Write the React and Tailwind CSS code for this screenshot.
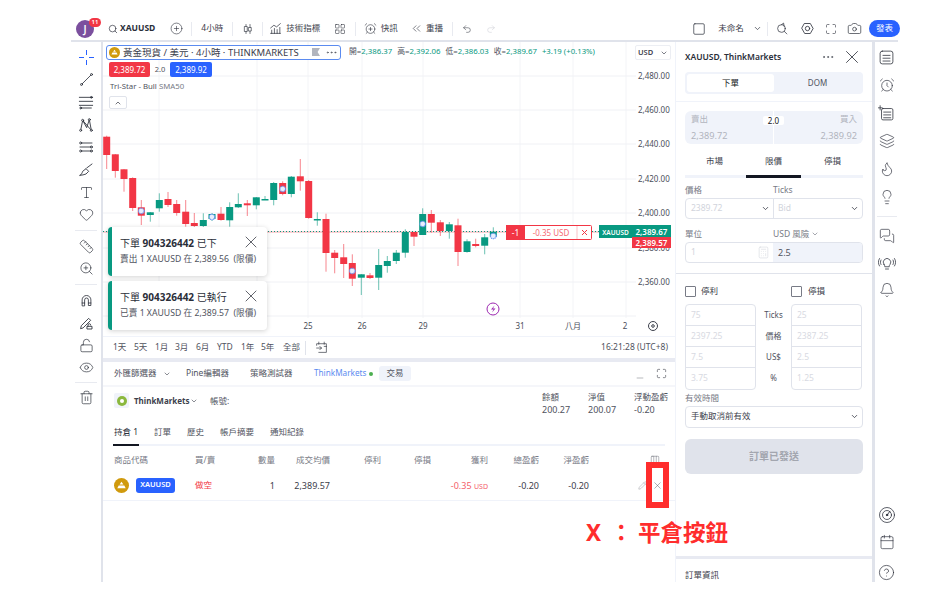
import React from "react";
import { Search, CirclePlus, LayoutGrid, AlarmClockPlus, ChevronsLeft, Undo2, Redo2, Square, ChevronDown, ChevronUp, Maximize, Camera, X, Ellipsis, Minus, Layers, Flame, Lightbulb, MessagesSquare, Bell, Calendar, CircleHelp, AlarmClock, Ruler, ZoomIn, LockOpen, Eye, Trash2, Heart, Type, Pencil, Calculator, Columns3 } from "lucide-react";

const C = [
[106.7,136.7,155,135.7,169,0],[115.3,154.3,171,154,177.7,0],[124,169.3,179,169,191.7,0],[132.7,178,208,177.3,211,0],[141.3,207.3,215.7,200,225,0],[150.3,212.3,215,212,221.7,1],[159.3,200,208.3,193.3,211.7,1],[168,199,205,192,207,0],[176.7,204,213,200,215.7,0],[185.7,211.7,224,200,226.7,0],[194.3,223,226,213,227,0],[203.3,220,226,213.3,227.3,1],[212,214,219,213,221,1],[221,213.7,220,207,220.7,0],[229.7,207,220.3,202.3,226.7,1],[238.3,204,207.3,193.3,208,1],[247.3,203.3,205.3,200,216,0],[256.3,197.3,205.3,197,209.3,1],[265,199,200,196,200,1],[273.7,183,200,182,205.3,1],[282.7,183,194,181.3,195.3,0],[291.3,176.7,194,176,197.3,1],[300.3,176.3,181.3,159,190.7,0],[308.7,181,218,180,218.7,0],[317.3,219,219.7,212.3,225.7,1],[326,219,253,213.7,271.7,0],[334.7,252.7,258,250,273.3,0],[343.7,257.3,264,244,278,0],[352.3,263,278.7,254.3,286,0],[361.3,274.3,277.7,274,295,1],[370,275.3,278,273,279,0],[378.7,265,277.7,249,290,1],[387.3,261,266,256,272.7,1],[396.3,252.7,261,250,264,1],[405.3,232,252.7,229.3,257.7,1],[414,232,236.7,232,246,0],[422.7,214,235,208.3,235,1],[431.3,214,222.7,210,232.7,0],[440.3,222.3,231,220,236,0],[449.3,224.3,231,222,238.7,1],[458,225.3,252,218.7,266,0],[467,241.3,252,239.3,252.7,1],[475.7,244,246,238.7,247.3,0],[484.7,237.3,245.7,234,254.3,1],[493.3,231.7,236.7,227.3,236.7,1],
];
const MARKS = [[141.3,211],[212,217],[282.7,189],[352.3,271],[422.7,224],[493.3,236]];
const PRICES = [["2,480.00",76],["2,460.00",110],["2,440.00",144],["2,420.00",179],["2,400.00",213],["2,380.00",248],["2,360.00",282]];
const V = [159,257,308,362,423,520,573,626];
const H = [76,110,144,179,213,248,282,316];
const TIMES = [["25",308],["26",362],["29",423],["31",520],["八月",573],["2",625]];

const RED = "#f23645", GREEN = "#089981";

function S({ children, size = 15, className = "" }) {
  return <svg viewBox="0 0 24 24" width={size} height={size} fill="none" stroke="#2a2e39" strokeWidth="1.3" strokeLinecap="round" strokeLinejoin="round" className={className}>{children}</svg>;
}

function Chart() {
  return (
    <svg viewBox="103 42 571 294" width="571" height="294" className="block">
      {V.map((x) => <line key={x} x1={x} x2={x} y1="42" y2="318" stroke="#f3f4f7" />)}
      {H.map((y) => <line key={y} x1="103" x2="636" y1={y} y2={y} stroke="#f0f1f5" />)}
      <line x1="103" x2="636" y1="232" y2="232" stroke="#f7a5ab" />
      <line x1="103" x2="636" y1="231.5" y2="231.5" stroke={GREEN} strokeDasharray="1 2" />
      {C.map(([x, o, c, h, l, g], i) => {
        const col = g ? GREEN : RED;
        return (
          <g key={i}>
            <line x1={x} x2={x} y1={h} y2={l} stroke={col} strokeOpacity="0.6" />
            <rect x={x - 3.5} y={o} width="7" height={Math.max(1.5, c - o)} fill={col} />
          </g>
        );
      })}
      {MARKS.map(([x, y]) => (
        <circle key={x} cx={x} cy={y} r="2.8" fill="#e8eefc" stroke="#5b8bf0" strokeWidth="1.1" strokeDasharray="1.2 0.6" />
      ))}
      <circle cx="493" cy="309" r="6" fill="#fff" stroke="#9c27b0" />
      <path d="M494.500 305.500 L491 309.500 H493.500 L492 312.500 L495.500 308.500 H493 Z" fill="#9c27b0" />
      <g fontSize="8" fill="#4a4e5a">
        {PRICES.map(([t, y]) => <text key={t} x="638" y={y + 3}>{t}</text>)}
        {TIMES.map(([t, x]) => <text key={t} x={x} y="329" textAnchor="middle">{t}</text>)}
      </g>
      <g>
        <rect x="506.500" y="225.500" width="85" height="14" fill="#fff" stroke={RED} rx="1" />
        <rect x="506" y="225" width="19" height="15" fill={RED} />
        <text x="515.500" y="235.500" fontSize="8.500" fill="#fff" textAnchor="middle">-1</text>
        <text x="551" y="235.500" fontSize="8" fill={RED} textAnchor="middle" opacity="0.75">-0.35 USD</text>
        <line x1="577" x2="577" y1="226" y2="239" stroke="#f9c3c7" />
        <path d="M582 230 L587 235 M587 230 L582 235" stroke={RED} />
        <rect x="599" y="225" width="33" height="13" fill={GREEN} />
        <text x="615.500" y="234.500" fontSize="6.500" fontWeight="600" fill="#fff" textAnchor="middle">XAUUSD</text>
        <rect x="632" y="236" width="39" height="12" fill={RED} />
        <text x="651.500" y="245.500" fontSize="8" fontWeight="600" fill="#fff" textAnchor="middle">2,389.57</text>
        <rect x="632" y="225" width="39" height="12" fill={GREEN} />
        <text x="651.500" y="234.500" fontSize="8" fontWeight="600" fill="#fff" textAnchor="middle">2,389.67</text>
      </g>
      <circle cx="653" cy="326" r="4.500" fill="none" stroke="#3c404b" />
      <circle cx="653" cy="326" r="1.300" fill="none" stroke="#3c404b" />
    </svg>
  );
}

function GoldLogo({ size = 11 }) {
  return (
    <svg viewBox="0 0 16 16" width={size} height={size} className="shrink-0">
      <circle cx="8" cy="8" r="8" fill="#d09a0d" />
      <path d="M8 4 L10 7 H6 Z" fill="#fff" />
      <path d="M3.500 11 L5 8 H11 L12.500 11 Z" fill="#fff" />
    </svg>
  );
}

function TopBar() {
  const sep = "w-px h-[14px] bg-[#e8eaf0] shrink-0";
  return (
    <div className="h-[23px] flex items-center text-[8.500px] text-[#3c404b] leading-none w-[829px] shrink-0 whitespace-nowrap">
      <div className="relative ml-[5px] w-[18px] h-[18px] rounded-full bg-[#7b4f9e] text-white text-[10px] font-semibold flex items-center justify-center shrink-0">
        J
        <span className="absolute -top-[2px] -right-[7px] w-[12px] h-[9px] rounded-full bg-[#f23645] text-[6px] flex items-center justify-center">11</span>
      </div>
      <Search size={10} strokeWidth={1.6} className="ml-[14px] text-[#2a2e39] shrink-0" />
      <span className="ml-[2px] font-bold text-[#2a2e39] w-[36px]">XAUUSD</span>
      <CirclePlus size={13} strokeWidth={1.100} className="ml-[15px] text-[#2a2e39] shrink-0" />
      <span className={`${sep} ml-[8px]`} />
      <span className="ml-[9px] w-[22px]">4小時</span>
      <span className={`${sep} ml-[9px]`} />
      <span className="ml-[9px] w-[12px] flex justify-center">
        <S size={14}><path d="M8 3v18M16 3v18" /><rect x="5.500" y="7" width="5" height="10" fill="#fff" /><rect x="13.500" y="9" width="5" height="7" fill="#fff" /></S>
      </span>
      <span className={`${sep} ml-[8px]`} />
      <span className="ml-[6px]"><S size={13}><path d="M3 21h18M5 21v-6M10 21v-9M15 21v-7M20 21v-11M3 11l6-5 5 3 7-6" /></S></span>
      <span className="ml-[4px] w-[36px]">技術指標</span>
      <LayoutGrid size={12} strokeWidth={1.100} className="ml-[13px] text-[#2a2e39] shrink-0" />
      <span className={`${sep} ml-[9px]`} />
      <AlarmClockPlus size={13} strokeWidth={1.100} className="ml-[8px] text-[#2a2e39] shrink-0" />
      <span className="ml-[4px] w-[18px]">快訊</span>
      <ChevronsLeft size={13} strokeWidth={1.100} className="ml-[12px] text-[#2a2e39] shrink-0" />
      <span className="ml-[3px] w-[18px]">重播</span>
      <span className={`${sep} ml-[9px]`} />
      <Undo2 size={10} strokeWidth={1.200} className="ml-[9px] text-[#2a2e39] shrink-0" />
      <Redo2 size={10} strokeWidth={1.200} className="ml-[14px] text-[#c8cad2] shrink-0" />
      <Square size={14} strokeWidth={1.200} className="ml-[196px] text-[#2a2e39] shrink-0" />
      <span className="ml-[12px] w-[27px]">未命名</span>
      <ChevronDown size={9} className="ml-[9px] shrink-0" />
      <span className={`${sep} ml-[5px]`} />
      <span className="ml-[8px]"><S size={13}><circle cx="10" cy="12" r="7" /><path d="M15 17l5 5M10 5l4-3 1 6" /></S></span>
      <span className="ml-[11px]"><S size={15}><path d="M7.500 4h9L21 12l-4.500 8h-9L3 12z" /><circle cx="12" cy="12" r="3.500" /></S></span>
      <Maximize size={12} strokeWidth={1.200} className="ml-[10px] text-[#2a2e39] shrink-0" />
      <Camera size={15} strokeWidth={1.100} className="ml-[10px] text-[#2a2e39] shrink-0" />
      <span className="ml-[7px] w-[32px] h-[17px] rounded-full bg-[#2962ff] text-white flex items-center justify-center">發表</span>
    </div>
  );
}

function Sep({ my = "my-[6px]" }) {
  return <div className={`h-px bg-[#e8eaf0] w-[22px] ${my} shrink-0`} />;
}

function LeftTool({ children }) {
  return <div className="h-[22.500px] flex items-center justify-center shrink-0 text-[#2a2e39]">{children}</div>;
}

function LeftBar() {
  const p = { size: 15, strokeWidth: 1.100 };
  return (
    <div className="w-[30px] shrink-0 flex flex-col items-center pt-[4px]">
      <LeftTool><svg width="15" height="15" viewBox="0 0 15 15" stroke="#2962ff" fill="none"><path d="M7.500 0v5M7.500 10v5M0 7.500h5M10 7.500h5" /></svg></LeftTool>
      <LeftTool><S><circle cx="4" cy="20" r="1.600" /><circle cx="20" cy="4" r="1.600" /><path d="M5 19L19 5" /></S></LeftTool>
      <LeftTool><S size={16}><path d="M2 5h20M2 11h20M2 17h20M4 21h16" /><circle cx="20" cy="5" r="1.300" /><circle cx="4" cy="21" r="1.300" /></S></LeftTool>
      <LeftTool><S size={16}><path d="M4 20L7 5l6 11 4-12 3 16M7 5l13 15" /><circle cx="7" cy="5" r="1.500" fill="#fff" /><circle cx="17" cy="4" r="1.500" fill="#fff" /><circle cx="4" cy="20" r="1.500" fill="#fff" /><circle cx="20" cy="20" r="1.500" fill="#fff" /></S></LeftTool>
      <LeftTool><S size={16}><path d="M5 6h16M3 12h18M5 18h16" /><circle cx="4" cy="6" r="1.500" fill="#fff" /><circle cx="20" cy="12" r="1.500" fill="#fff" /><circle cx="4" cy="18" r="1.500" fill="#fff" /><circle cx="20" cy="18" r="1.500" fill="#fff" /></S></LeftTool>
      <LeftTool><S size={16}><path d="M3 20c2-1 3-3 4-6l5-4 4 4-4 4c-3 1-6 2-9 2zM13 9l8-6" /></S></LeftTool>
      <LeftTool><Type {...p} /></LeftTool>
      <LeftTool><Heart {...p} /></LeftTool>
      <Sep my="my-[3.500px]" />
      <div className="h-px" />
      <LeftTool><Ruler {...p} /></LeftTool>
      <LeftTool><ZoomIn {...p} /></LeftTool>
      <Sep my="my-[4px]" />
      <LeftTool><S><path d="M5 20V11a7 7 0 0 1 14 0v9h-4v-9a3 3 0 0 0-6 0v9zM5 16h4M15 16h4" /></S></LeftTool>
      <LeftTool><S size={16}><path d="M4 20l1-4L16 5l3 3L8 19zM14 21h7v-4h-7zM15 17v-2a2 2 0 0 1 4 0" /></S></LeftTool>
      <LeftTool><LockOpen {...p} /></LeftTool>
      <LeftTool><Eye {...p} /></LeftTool>
      <Sep my="my-[3px]" />
      <LeftTool><Trash2 {...p} /></LeftTool>
    </div>
  );
}

function Toast({ title, sub }) {
  return (
    <div className="w-[159px] h-[49px] rounded-[4px] bg-white border-l-[4px] border-[#089981] shadow-[0_1px_5px_rgba(0,0,0,0.18)] pl-[8px] pr-[9px] pt-[10px] leading-none relative">
      <div className="text-[10px] text-[#2a2e39] flex items-center h-[11px]">下單&nbsp;<b className="font-bold">904326442</b>&nbsp;{title}</div>
      <div className="text-[8.700px] text-[#50535e] mt-[7px] whitespace-nowrap">{sub}</div>
      <X size={20} strokeWidth={0.800} className="absolute right-[6px] top-[5px] text-[#131722]" />
    </div>
  );
}

function ChartPanel() {
  return (
    <div className="h-[316px] flex flex-col shrink-0">
      <div className="relative h-[294px]">
        <Chart />
        <div className="absolute left-[3px] top-[3px] w-[235px] h-[15px] border border-[#5b8bf0] rounded-[3px] bg-white flex items-center pl-[2px] text-[9.500px] text-[#3c404b] leading-none whitespace-nowrap">
          <GoldLogo />
          <span className="ml-[3px]">黃金現貨 / 美元 · 4小時 · THINKMARKETS</span>
          <span className="absolute left-[205px] top-[2px] w-[8px] h-[8px] bg-[#b2b5be] [clip-path:polygon(0_0,100%_0,70%_50%,100%_100%,0_100%)]" />
          <Ellipsis size={13} strokeWidth={1.100} className="absolute right-[2px] top-[0px]" />
        </div>
        <div className="absolute left-[246px] top-[6px] text-[7.800px] leading-none whitespace-nowrap text-[#089981] flex gap-[5px]">
          <span><span className="text-[#50535e]">開=</span>2,386.37</span>
          <span><span className="text-[#50535e]">高=</span>2,392.06</span>
          <span><span className="text-[#50535e]">低=</span>2,386.03</span>
          <span><span className="text-[#50535e]">收=</span>2,389.67</span>
          <span>+3.19 (+0.13%)</span>
        </div>
        <div className="absolute left-[532px] top-[3px] w-[36px] h-[15px] border border-[#eceef3] rounded-[2px] bg-white text-[7.500px] font-semibold text-[#3c404b] flex items-center justify-between pl-[2px] pr-[2px] leading-none">
          USD <ChevronDown size={8} />
        </div>
        <div className="absolute left-[6px] top-[20px] flex items-center text-[8px] leading-none">
          <span className="w-[41px] h-[15px] rounded-[2px] bg-[#f23645] text-white flex items-center justify-center">2,389.72</span>
          <span className="w-[20px] text-center text-[#50535e] text-[7.500px]">2.0</span>
          <span className="w-[42px] h-[15px] rounded-[2px] bg-[#2962ff] text-white flex items-center justify-center">2,389.92</span>
        </div>
        <div className="absolute left-[7px] top-[41px] text-[7.800px] leading-none text-[#50535e] whitespace-nowrap">Tri-Star - Bull <span className="text-[#787b86]">SMA50</span></div>
        <div className="absolute left-[6px] top-[54px] w-[18px] h-[13px] border border-[#e0e3eb] rounded-[2px] flex items-center justify-center"><ChevronUp size={8} className="text-[#2a2e39]" /></div>
        <div className="absolute left-[5px] top-[185px] flex flex-col gap-[5px]">
          <Toast title="已下" sub={"賣出 1 XAUUSD 在 2,389.56\u00a0 (限價)"} />
          <Toast title="已執行" sub={"已賣 1 XAUUSD 在 2,389.57\u00a0 (限價)"} />
        </div>
      </div>
      <div className="h-[22px] border-t border-[#f0f3fa] flex items-center pl-[10px] pr-[7px] text-[8.500px] text-[#50535e] leading-none whitespace-nowrap">
        <span className="w-[21px]">1天</span>
        <span className="w-[21px]">5天</span>
        <span className="w-[20px]">1月</span>
        <span className="w-[21px]">3月</span>
        <span className="w-[21px]">6月</span>
        <span className="w-[24px]">YTD</span>
        <span className="w-[20px]">1年</span>
        <span className="w-[22px]">5年</span>
        <span className="w-[22px]">全部</span>
        <span className="w-px h-[14px] bg-[#e0e3eb] mr-[9px]" />
        <S size={13}><path d="M3 8V5h18v16H7M7 2v4M17 2v4M3 13h9M9 10l3 3-3 3M21 10h-4" strokeWidth="1.200" /></S>
        <span className="ml-auto">16:21:28 (UTC+8)</span>
      </div>
    </div>
  );
}

const COLS = "grid grid-cols-[81px_55px_25px_55px_51px_50px_57px_51px_50px] items-center";

function BottomPanel() {
  return (
    <div className="flex-1 h-[220px] relative text-[8.500px] leading-none text-[#50535e] whitespace-nowrap">
      <div className="h-[25px] border-b-2 border-[#f5f6fa] flex items-center pl-[11px] pr-[8px]">
        <span className="w-[43px]">外匯篩選器</span>
        <ChevronDown size={8} className="ml-[6px]" />
        <span className="ml-[15px] w-[43px]">Pine編輯器</span>
        <span className="ml-[21px] w-[43px]">策略測試器</span>
        <span className="ml-[21px] text-[#5b8bf0] text-[8.200px] w-[52px]">ThinkMarkets</span>
        <span className="ml-[3px] w-[4px] h-[4px] rounded-full bg-[#4caf50]" />
        <span className="ml-[6px] w-[32px] h-[15px] rounded-[3px] bg-[#f0f3fa] flex items-center justify-center">交易</span>
        <Minus size={10} strokeWidth={1} className="ml-auto mt-[8px]" />
        <Maximize size={11} strokeWidth={1.200} className="ml-[11px] text-[#2a2e39]" />
      </div>
      <div className="flex pl-[11px] pr-[11px] pt-[6px] items-start h-[36px]">
        <span className="w-[15px] h-[15px] rounded-[2px] bg-[#f0f3fa] flex items-center justify-center">
          <span className="w-[10px] h-[10px] rounded-full bg-[#8bb83e] flex items-center justify-center"><span className="w-[4px] h-[4px] rounded-full bg-white" /></span>
        </span>
        <span className="ml-[5px] mt-[4px] font-bold text-[8px] text-[#3c404b] w-[55px]">ThinkMarkets</span>
        <ChevronDown size={8} className="mt-[4px] ml-[1px]" />
        <span className="ml-[12px] mt-[4px]">帳號:</span>
        <div className="ml-auto flex">
          <div className="w-[46px]"><div>餘額</div><div className="mt-[3px] text-[9px]">200.27</div></div>
          <div className="w-[46px]"><div>淨值</div><div className="mt-[3px] text-[9px]">200.07</div></div>
          <div className="w-[30px]"><div>浮動盈虧</div><div className="mt-[3px] text-[9px]">-0.20</div></div>
        </div>
      </div>
      <div className="ml-[10px] mr-[10px] mt-[2px] h-[21px] border-b-[2px] border-[#f0f3fa] flex pl-px relative">
        <span className="absolute left-0 -bottom-[2px] w-[26px] h-[2px] bg-[#131722]" />
        <span className="w-[40px] mt-[3px] text-[#2a2e39]">持倉 1</span>
        <span className="w-[33px] mt-[3px]">訂單</span>
        <span className="w-[33px] mt-[3px]">歷史</span>
        <span className="w-[50px] mt-[3px]">帳戶摘要</span>
        <span className="mt-[3px]">通知紀錄</span>
      </div>
      <div className={`${COLS} pl-[11px] pt-[10px] text-[#787b86]`}>
        <span>商品代碼</span><span>買/賣</span><span className="text-right">數量</span><span className="text-right">成交均價</span>
        <span className="text-right">停利</span><span className="text-right">停損</span><span className="text-right">獲利</span><span className="text-right">總盈虧</span><span className="text-right">淨盈虧</span>
      </div>
      <div className={`${COLS} pl-[11px] h-[30px] mt-[6px] border-b border-[#f0f3fa] text-[9px] text-[#3c404b]`}>
        <span className="flex items-center gap-[7px]">
          <GoldLogo size={15} />
          <span className="w-[39px] h-[15px] rounded-[3px] bg-[#2962ff] text-white text-[7.500px] font-semibold flex items-center justify-center">XAUUSD</span>
        </span>
        <span className="text-[#f23645] text-[8.500px]">做空</span>
        <span className="text-right">1</span>
        <span className="text-right">2,389.57</span>
        <span /><span />
        <span className="text-right text-[#f23645] opacity-80">-0.35 <span className="text-[7px]">USD</span></span>
        <span className="text-right">-0.20</span>
        <span className="text-right">-0.20</span>
      </div>
      <Columns3 size={10} strokeWidth={1} className="absolute left-[547px] top-[93px] text-[#50535e]" />
      <Pencil size={9} strokeWidth={1} className="absolute left-[535px] top-[119px] text-[#787b86]" />
      <X size={11} strokeWidth={1} className="absolute left-[549px] top-[118px] text-[#50535e]" />
    </div>
  );
}

function Field({ children, className = "" }) {
  return <div className={`flex items-center text-[8.500px] text-[#d1d4dc] leading-none ${className}`}>{children}</div>;
}

function OrderPanel() {
  const stack = "rounded-[4px] border border-[#e0e3eb] flex flex-col";
  const row = "h-[21px] flex items-center pl-[5px] text-[8.500px] text-[#d8dae2] border-b border-[#e0e3eb] last:border-b-0";
  return (
    <div className="w-[197px] shrink-0 h-[540px] border-l border-[#f0f3fa] flex flex-col text-[8.500px] leading-none text-[#50535e] whitespace-nowrap">
      <div className="h-[60px] border-b border-[#f0f3fa] px-[9px] shrink-0">
        <div className="flex items-center h-[30px] pr-[0px]">
          <span className="font-semibold text-[8.500px] text-[#2a2e39]">XAUUSD, ThinkMarkets</span>
          <Ellipsis size={14} strokeWidth={1} className="ml-auto text-[#2a2e39]" />
          <X size={22} strokeWidth={0.800} className="ml-[6px] text-[#131722]" />
        </div>
        <div className="h-[22px] rounded-[4px] bg-[#f0f3fa] flex items-center p-[2px]">
          <span className="w-[87px] h-[18px] bg-white rounded-[3px] flex items-center justify-center text-[#131722]">下單</span>
          <span className="flex-1 text-center text-[8px]">DOM</span>
        </div>
      </div>
      <div className="mx-[9px] mt-[9px] h-[33px] rounded-[6px] bg-[#f0f3fa] relative text-[#b2b5be] shrink-0">
        <span className="absolute left-[6px] top-[4px]">賣出</span>
        <span className="absolute right-[6px] top-[4px]">買入</span>
        <span className="absolute left-[6px] bottom-[4px] text-[9.200px]">2,389.72</span>
        <span className="absolute right-[6px] bottom-[4px] text-[9.200px]">2,389.92</span>
        <span className="absolute left-[88px] top-0 bottom-0 w-px bg-white" />
        <span className="absolute left-[78px] top-[5px] w-[21px] h-[9px] rounded-[2px] bg-white text-[#131722] text-[8px] flex items-center justify-center">2.0</span>
      </div>
      <div className="mx-[9px] h-[27px] mt-[7px] border-b-[3px] border-[#f0f3fa] flex relative shrink-0 text-[#3c404b]">
        <span className="w-[59px] text-center pt-[6px]">市場</span>
        <span className="w-[59px] text-center pt-[6px]">限價</span>
        <span className="w-[59px] text-center pt-[6px]">停損</span>
        <span className="absolute left-[61px] -bottom-[3px] w-[55px] h-[3px] bg-[#131722]" />
      </div>
      <div className="mx-[9px] mt-[8px] flex shrink-0 text-[#787b86]"><span className="w-[88px]">價格</span><span>Ticks</span></div>
      <div className="mx-[9px] mt-[3px] h-[21px] border border-[#e0e3eb] rounded-[4px] flex shrink-0">
        <Field className="w-[88px] border-r border-[#e0e3eb] pl-[5px] justify-between pr-[3px]">2389.72<ChevronDown size={9} className="text-[#2a2e39]" /></Field>
        <Field className="flex-1 pl-[4px] justify-between pr-[3px]">Bid<ChevronDown size={9} className="text-[#2a2e39]" /></Field>
      </div>
      <div className="mx-[9px] mt-[11px] flex items-center shrink-0 text-[#787b86]"><span className="w-[88px]">單位</span><span>USD 風險</span><ChevronDown size={8} className="ml-[2px]" /></div>
      <div className="mx-[9px] mt-[4px] h-[21px] border border-[#e0e3eb] rounded-[4px] flex overflow-hidden shrink-0">
        <Field className="w-[87px] pl-[5px] justify-between pr-[3px]">1<Calculator size={13} strokeWidth={1} className="text-[#d1d4dc]" /></Field>
        <div className="flex-1 bg-[#f0f3fa] flex items-center pl-[5px] text-[9px] text-[#50535e]">2.5</div>
      </div>
      <div className="h-px bg-[#e0e3eb] mt-[10px] shrink-0" />
      <div className="mx-[9px] mt-[11px] flex items-center h-[12px] shrink-0 text-[#3c404b]">
        <span className="w-[11px] h-[11px] border border-[#787b86] rounded-[1px]" />
        <span className="ml-[5px] w-[90px]">停利</span>
        <span className="w-[11px] h-[11px] border border-[#787b86] rounded-[1px]" />
        <span className="ml-[6px]">停損</span>
      </div>
      <div className="mx-[9px] mt-[7px] flex shrink-0">
        <div className={`${stack} w-[71px]`}>
          <div className={row}>75</div><div className={row}>2397.25</div><div className={row}>7.5</div><div className={row}>3.75</div>
        </div>
        <div className="w-[35px] flex flex-col items-center text-[8px] text-[#50535e]">
          <span className="h-[21px] flex items-center">Ticks</span><span className="h-[21px] flex items-center">價格</span><span className="h-[21px] flex items-center">US$</span><span className="h-[21px] flex items-center">%</span>
        </div>
        <div className={`${stack} w-[71px]`}>
          <div className={row}>25</div><div className={row}>2387.25</div><div className={row}>2.5</div><div className={row}>1.25</div>
        </div>
      </div>
      <div className="mx-[9px] mt-[4px] text-[#787b86] shrink-0">有效時間</div>
      <div className="mx-[9px] mt-[3px] h-[22px] border border-[#e0e3eb] rounded-[4px] flex items-center justify-between px-[5px] pr-[3px] text-[#3c404b] shrink-0">手動取消前有效<ChevronDown size={9} className="text-[#2a2e39]" /></div>
      <div className="mx-[9px] mt-[11px] h-[35px] rounded-[6px] bg-[#e0e3eb] flex items-center justify-center text-[10px] font-semibold text-[#a3a6af] shrink-0">訂單已發送</div>
      <div className="h-[3px] bg-[#e8eaf2] mt-[82px] shrink-0" />
      <div className="mx-[9px] mt-[12px] text-[#3c404b]">訂單資訊</div>
    </div>
  );
}

function RT({ children, h = "h-[28px]" }) {
  return <div className={`${h} flex items-center justify-center text-[#2a2e39] shrink-0`}>{children}</div>;
}

function RightBar() {
  const p = { size: 16, strokeWidth: 1 };
  return (
    <div className="w-[23px] shrink-0 h-[540px] flex flex-col items-center pt-[1px]">
      <RT><S size={17}><rect x="3" y="3" width="18" height="18" rx="3" strokeWidth="1.100" /><path d="M7 9h10M7 13h10M7 17h10" strokeWidth="1.100" /></S></RT>
      <RT><AlarmClock {...p} /></RT>
      <RT><S size={17}><rect x="5" y="5" width="16" height="16" rx="2" strokeWidth="1.100" /><path d="M8 10h10M8 14h10M8 18h10M3 1v6M0 4h6" strokeWidth="1.100" /></S></RT>
      <RT><Layers {...p} /></RT>
      <RT><Flame {...p} /></RT>
      <RT><Lightbulb {...p} /></RT>
      <div className="w-[20px] h-px bg-[#e8eaf0] my-[5px] shrink-0" />
      <RT h="h-[27px]"><MessagesSquare {...p} /></RT>
      <RT h="h-[27px]"><S size={18}><path d="M8 14a5 5 0 1 1 8 0c-1 1-1 2-1 3H9c0-1 0-2-1-3zM10 20h4M4 8c-1 2-1 4 0 6M2 6c-2 3-2 7 0 10M20 8c1 2 1 4 0 6M22 6c2 3 2 7 0 10" strokeWidth="1" /></S></RT>
      <RT><Bell {...p} /></RT>
      <div className="flex-1" />
      <RT h="h-[27px]"><S size={18}><circle cx="12" cy="12" r="10" strokeWidth="1" /><circle cx="12" cy="12" r="6" strokeWidth="1" /><path d="M12 12l4-5" strokeWidth="1.200" /><circle cx="12" cy="12" r="1" fill="#2a2e39" /></S></RT>
      <RT h="h-[27px]"><Calendar {...p} /></RT>
      <div className="h-[7px]" />
      <RT h="h-[20px]"><CircleHelp size={17} strokeWidth={1} /></RT>
    </div>
  );
}

export default function App() {
  return (
    <div className="relative w-[925px] h-[591px] bg-white overflow-hidden font-[family-name:'Noto_Sans','Noto_Sans_CJK_TC',sans-serif]">
      <div className="pl-[71px] pt-[17px] flex flex-col">
        <TopBar />
        <div className="w-[827px] h-[2px] bg-[#e0e3eb]" />
        <div className="flex h-[540px] w-[827px]">
          <LeftBar />
          <div className="w-[2px] h-[540px] bg-[#e0e3eb] shrink-0" />
          <div className="w-[572px] shrink-0 flex flex-col">
            <ChartPanel />
            <div className="h-[4px] bg-[#e8eaf2] shrink-0" />
            <BottomPanel />
          </div>
          <OrderPanel />
          <div className="w-[3px] h-[540px] bg-[#e0e3eb] shrink-0" />
          <RightBar />
        </div>
      </div>
      <div className="absolute left-[646px] top-[462px] w-[23px] h-[46px] border-[6px] border-[#ff2d2d]" />
      <div className="absolute left-[586px] top-[519px] flex items-center text-[22.500px] font-bold text-[#ff2d2d] leading-[28px] whitespace-nowrap">
        <span className="w-[24px]">X</span>
        <span className="w-[28px]">：</span>
        <span>平倉按鈕</span>
      </div>
    </div>
  );
}
